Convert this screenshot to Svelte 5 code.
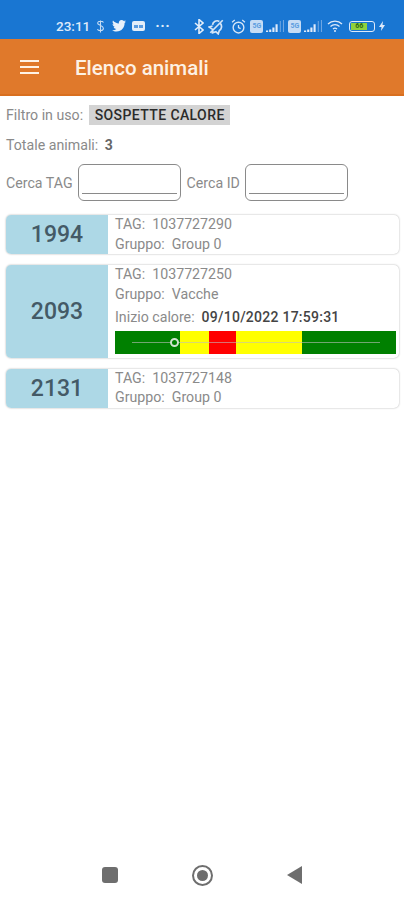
<script>
  const animals = [
    { id: "1994", tag: "1037727290", group: "Group 0" },
    { id: "2093", tag: "1037727250", group: "Vacche", heat: "09/10/2022 17:59:31" },
    { id: "2131", tag: "1037727148", group: "Group 0" }
  ];
</script>

<div class="screen">
  <div class="statusbar">
    <span class="time">23:11</span>
    <svg class="ic" style="width:9px" viewBox="0 0 9 13"><path d="M7.5 2.5C6.5.8 2 .8 1.6 3c-.3 2 5.8 2.600 5.800 5.200 0 3-5 3-6 1M4.500 .5v12" fill="none" stroke="#c5dcf4" stroke-width="1.100"/></svg>
    <svg class="ic tw" viewBox="0 0 24 20"><path d="M24 2.400c-.9.4-1.800.7-2.800.8 1-.6 1.800-1.600 2.200-2.700-1 .6-2 1-3.100 1.200C19.300.7 18 0 16.600 0c-3.200 0-5.500 3-4.800 6C7.700 5.800 4.100 3.900 1.700.9.400 3.100 1 6 3.200 7.500c-.8 0-1.600-.2-2.200-.6 0 2.300 1.600 4.500 4 5-.7.200-1.500.2-2.200.1.600 2 2.500 3.400 4.600 3.400-2 1.600-4.600 2.300-7.300 2 2.200 1.400 4.800 2.200 7.500 2.200 9.100 0 14.300-7.700 14-14.600 1-.7 1.800-1.500 2.400-2.600z" fill="#e8f1fb"/></svg>
    <span class="msg"><i></i><i></i></span>
    <span class="dots">···</span>
    <span class="right">
      <svg class="ic" style="width:10px" viewBox="0 0 10 15"><path d="M1 4l8 7-4 3.500V.5l4 3.500-8 7" fill="none" stroke="#e3eefa" stroke-width="1.600"/></svg>
      <svg class="ic" style="width:17px" viewBox="0 0 15 15"><path d="M2 13L13 2M4 6a4 4 0 0 1 6-3M11 5a4 4 0 0 1-1 6l-1 3-2-2-3 1 0-3-3-2 3-1" fill="none" stroke="#d5e5f7" stroke-width="1.500"/></svg>
      <svg class="ic alarm" viewBox="0 0 14 14"><circle cx="7" cy="8" r="5" fill="none" stroke="#d5e5f7" stroke-width="1.300"/><path d="M7 5.500V8l2 1M1 3l2.500-2M13 3l-2.500-2" fill="none" stroke="#d5e5f7" stroke-width="1.200"/></svg>
      <span class="sim">5G</span>
      <svg class="ic bars" viewBox="0 0 17 12"><path d="M0 12h2v-2H0zM3 12h2V9H3zM6 12h2V7H6zM9 12h2V4H9z" fill="#dfeafa"/><path d="M13 12h1V1h-1zM16 12h1V0h-1z" fill="#6fa6e2"/></svg>
      <span class="sim">5G</span>
      <svg class="ic bars" viewBox="0 0 17 12"><path d="M0 12h2v-2H0zM3 12h2V9H3zM6 12h2V7H6zM9 12h2V4H9z" fill="#dfeafa"/><path d="M13 12h1V1h-1zM16 12h1V0h-1z" fill="#6fa6e2"/></svg>
      <svg class="ic wifi" viewBox="0 0 16 12"><path d="M1 4a10 10 0 0 1 14 0M3.500 6.500a6.500 6.500 0 0 1 9 0M6 9a3 3 0 0 1 4 0" fill="none" stroke="#dfeafa" stroke-width="1.300"/><circle cx="8" cy="11" r="1" fill="#dfeafa"/></svg>
      <span class="battery"><b>66</b></span>
      <svg class="ic" style="width:6px" viewBox="0 0 6 10"><path d="M4 0L0 6h2.500L2 10l4-6H3.500z" fill="#dfeafa"/></svg>
    </span>
  </div>

  <header>
    <div class="burger"><i></i><i></i><i></i></div>
    <h1>Elenco animali</h1>
  </header>

  <main>
    <div class="filter">
      <span>Filtro in uso:</span>
      <span class="chip">SOSPETTE CALORE</span>
    </div>
    <div class="total">Totale animali: <b>3</b></div>
    <div class="search">
      <label for="tag">Cerca TAG</label>
      <div class="box"><input id="tag" /></div>
      <label for="aid">Cerca ID</label>
      <div class="box"><input id="aid" /></div>
    </div>

    <div class="list">
      {#each animals as a}
        <div class="card">
          <div class="num">{a.id}</div>
          <div class="info">
            <div class="line">TAG:&nbsp; {a.tag}</div>
            <div class="line">Gruppo:&nbsp; {a.group}</div>
            {#if a.heat}
              <div class="line heat">Inizio calore:&nbsp; <b>{a.heat}</b></div>
              <div class="bar">
                <span class="g" style="width:65px"></span>
                <span class="y" style="width:29px"></span>
                <span class="r" style="width:27px"></span>
                <span class="y" style="width:66px"></span>
                <span class="g grow"></span>
                <span class="rule"></span>
                <span class="dot"></span>
              </div>
            {/if}
          </div>
        </div>
      {/each}
    </div>
  </main>

  <nav>
    <span class="square"></span>
    <span class="circle"><i></i></span>
    <svg width="15" height="18" viewBox="0 0 15 18"><path d="M15 0v18L0 9z" fill="#6e6e6e"/></svg>
  </nav>
</div>

<style>
  :global(body) {
    margin: 0;
    background: #fff;
  }
  .screen {
    width: 404px;
    height: 900px;
    display: flex;
    flex-direction: column;
    font-family: Roboto, "Liberation Sans", sans-serif;
    color: #8a8a8a;
    font-size: 14.200px;
    overflow: hidden;
  }
  .statusbar {
    height: 39px;
    flex: none;
    background: #1976d2;
    display: flex;
    align-items: center;
    padding: 13px 0 0 56px;
    box-sizing: border-box;
    color: #dfeafa;
  }
  .time {
    font-size: 13.500px;
    font-weight: 500;
    margin-right: 6px;
  }
  .ic {
    height: auto;
    display: block;
    flex: none;
  }
  .tw {
    width: 14px;
    margin: 0 6px 0 7px;
  }
  .msg {
    width: 13px;
    height: 10px;
    background: #e3eefa;
    border-radius: 2px;
    display: flex;
    gap: 1px;
    align-items: center;
    justify-content: center;
  }
  .msg i {
    width: 4px;
    height: 3px;
    background: #5b9ce0;
  }
  .dots {
    font-size: 15px;
    font-weight: 700;
    margin-left: 10px;
    letter-spacing: 0.500px;
  }
  .right {
    display: flex;
    align-items: center;
    margin-left: 24px;
    gap: 4px;
  }
  .alarm {
    width: 15px;
    margin-left: 2px;
  }
  .sim {
    width: 13px;
    height: 13px;
    background: #c6dcf5;
    border-radius: 2px;
    color: #5b9ce0;
    font-size: 7px;
    line-height: 13px;
    text-align: center;
    font-weight: 700;
  }
  .bars {
    width: 18px;
    margin-left: -1px;
  }
  .wifi {
    width: 16px;
    margin-left: 1px;
  }
  .battery {
    width: 26px;
    height: 11px;
    border: 1px solid #dfeafa;
    border-radius: 3px;
    display: flex;
    margin-left: 2px;
    padding: 1px;
    box-sizing: border-box;
  }
  .battery b {
    width: 16px;
    background: #8fd13f;
    color: #2d6a12;
    font-size: 7px;
    line-height: 7px;
    text-align: center;
  }
  header {
    height: 57px;
    flex: none;
    background: #e0792b;
    border-bottom: 2px solid #d96f1f;
    box-sizing: border-box;
    display: flex;
    align-items: center;
    padding: 0 0 0 20px;
  }
  .burger {
    width: 19px;
    display: flex;
    flex-direction: column;
    gap: 4px;
    margin-right: 36px;
  }
  .burger i {
    height: 2px;
    background: #fff3e6;
  }
  h1 {
    margin: 3px 0 0;
    font-size: 20.500px;
    font-weight: 500;
    color: #fdf1e4;
  }
  main {
    flex: 1;
    padding: 0 5px 0 6px;
  }
  .filter {
    display: flex;
    align-items: center;
    gap: 6px;
    height: 20px;
    margin-top: 9px;
  }
  .chip {
    background: #d3d3d3;
    color: #2b2b2b;
    font-weight: 500;
    font-size: 14px;
    letter-spacing: 0.400px;
    padding: 0 5.500px;
    line-height: 20px;
  }
  .total {
    margin-top: 11px;
    height: 18px;
    line-height: 18px;
  }
  .total b {
    font-weight: 700;
    font-size: 14px;
    margin-left: 3px;
    color: #666;
  }
  .search {
    display: flex;
    align-items: center;
    margin-top: 10px;
    height: 37px;
  }
  .search label {
    margin-right: 5px;
  }
  .box {
    width: 103px;
    height: 37px;
    border: 1.500px solid #8a8a8a;
    border-radius: 6px;
    box-sizing: border-box;
    padding: 0 3px 6px;
    display: flex;
    align-items: flex-end;
    margin-right: 6px;
  }
  input {
    width: 100%;
    border: 0;
    border-bottom: 1.500px solid #8a8a8a;
    padding: 0;
    background: none;
    outline: none;
  }
  .list {
    margin-top: 14px;
    display: flex;
    flex-direction: column;
    gap: 11px;
  }
  .card {
    display: flex;
    border-radius: 5px;
    box-shadow: 0 0 2px #a8a8a8;
    overflow: hidden;
    background: #fff;
  }
  .num {
    width: 102px;
    flex: none;
    background: #add8e6;
    color: #445a66;
    font-size: 23px;
    font-weight: 500;
    display: flex;
    align-items: center;
    justify-content: center;
  }
  .info {
    flex: 1;
    padding: 0 3px 0 7px;
    min-width: 0;
  }
  .line {
    line-height: 19.500px;
    height: 19.500px;
    white-space: nowrap;
  }
  .heat {
    margin-top: 4px;
  }
  .heat b {
    font-weight: 500;
    font-size: 14px;
    letter-spacing: 0.250px;
    color: #444;
  }
  .bar {
    position: relative;
    display: flex;
    height: 23px;
    margin: 3px 0 4px;
  }
  .g { background: #008000; }
  .y { background: #ffff00; }
  .r { background: #ff0000; }
  .grow { flex: 1; }
  .rule {
    position: absolute;
    left: 17px;
    right: 16px;
    top: 11px;
    height: 1px;
    background: rgba(190, 190, 190, 0.600);
  }
  .dot {
    position: absolute;
    left: 55px;
    top: 7px;
    width: 9px;
    height: 9px;
    box-sizing: border-box;
    border-radius: 50%;
    border: 2.500px solid #cfe3cf;
    background: #008000;
  }
  nav {
    height: 50px;
    flex: none;
    display: flex;
    align-items: center;
    padding: 0 0 0 102px;
  }
  .square {
    width: 16px;
    height: 16px;
    background: #6e6e6e;
    border-radius: 3px;
  }
  .circle {
    width: 21px;
    height: 21px;
    box-sizing: border-box;
    border: 2px solid #6e6e6e;
    border-radius: 50%;
    margin: 0 74px;
    display: flex;
    align-items: center;
    justify-content: center;
  }
  .circle i {
    width: 11px;
    height: 11px;
    background: #6e6e6e;
    border-radius: 50%;
  }
</style>
